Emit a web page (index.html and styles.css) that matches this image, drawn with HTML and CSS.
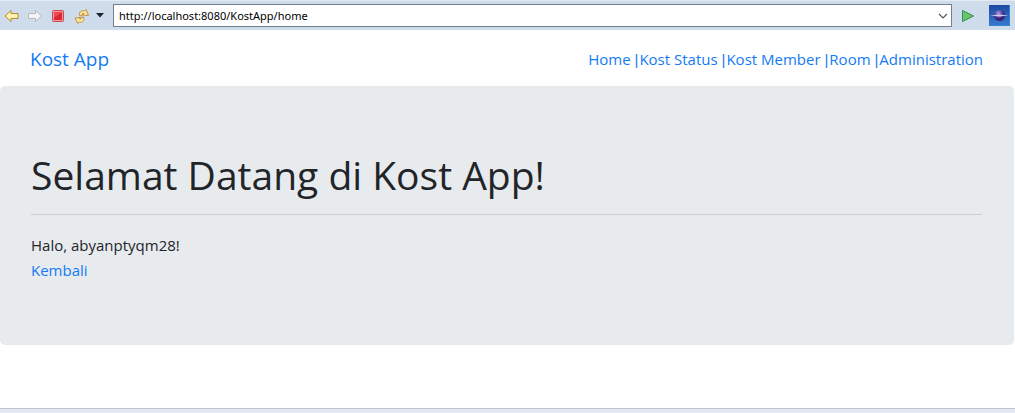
FILE: index.html
```html
<!DOCTYPE html>
<html lang="id">
<head>
<meta charset="utf-8">
<title>Kost App</title>
<link rel="stylesheet" href="styles.css">
</head>
<body>
<div class="browser">
  <form class="toolbar">
    <button type="button" class="tool" aria-label="Back"><svg width="16" height="16" viewBox="0 0 16 16"><path d="M1 8 7 2.500V5.500h7v5H7v3z" fill="#fff3b4" stroke="#b98a20" stroke-linejoin="round"/></svg></button>
    <button type="button" class="tool" aria-label="Forward"><svg width="16" height="16" viewBox="0 0 16 16"><path d="M14.500 8 8.500 2.500V5.500H1.500v5h7v3z" fill="#f1f3f5" stroke="#b5bac1" stroke-linejoin="round"/></svg></button>
    <button type="button" class="tool" aria-label="Stop"><svg width="16" height="16" viewBox="0 0 16 16"><rect x="2.500" y="2.500" width="11" height="11" rx="1" fill="#ee9a9c" stroke="#cf4a50"/><rect x="4" y="4" width="8" height="8" fill="#dd2635"/><path d="M4 4h8L4 10z" fill="#ea4a55"/></svg></button>
    <button type="button" class="tool tool-refresh" aria-label="Refresh"><svg width="18" height="18" viewBox="0 0 18 18" fill="#ffe9a4" stroke="#c28f38" stroke-linejoin="round"><path d="M7 9C5.500 6 7.500 3 11.500 4L13 2.500l2.500 6-6-.500L11 6.500C9.500 6 8.500 7 9 8.500z"/><path d="M10.500 10c1.500 3.500-1 6-4 5l-1.500 1.500-3-5.500 5.500-.500-1 1.500c1.500.500 2.500-.500 2-1.500z"/></svg></button>
    <button type="button" class="tool tool-menu" aria-label="More refresh options"><svg width="8" height="5" viewBox="0 0 8 5"><path d="M0 0h8L4 4.500z" fill="#1c2430"/></svg></button>
    <div class="address">
      <input class="address-input" type="text" aria-label="Address" value="http://localhost:8080/KostApp/home">
      <button type="button" class="address-toggle" aria-label="Show history"><svg width="10" height="6" viewBox="0 0 10 6"><path d="m1 1 4 4 4-4" fill="none" stroke="#555" stroke-width="1.200"/></svg></button>
    </div>
    <button type="button" class="tool tool-go" aria-label="Go"><svg width="16" height="16" viewBox="0 0 16 16"><path d="M2.500 2.500v11l11-5.500z" fill="#6cc56c" stroke="#2c9146" stroke-linejoin="round"/></svg></button>
    <button type="button" class="tool tool-external" aria-label="Open in external browser"><svg width="21" height="21" viewBox="0 0 21 21"><defs><linearGradient id="sky" x2="0" y2="1"><stop stop-color="#1d4aa0"/><stop offset="1" stop-color="#3979d0"/></linearGradient><radialGradient id="planet" cx=".4" cy=".3"><stop stop-color="#a79be0"/><stop offset="1" stop-color="#38217a"/></radialGradient></defs><path d="M0 0h21v21H0z" fill="url(#sky)"/><path d="M0 20.500h20.500V0" fill="none" stroke="#3185d5"/><circle cx="10.500" cy="10.500" r="5.500" fill="url(#planet)"/><path d="M1 10.500 10.500 9.500l9 1-9 1z" fill="#d3c9f3"/></svg></button>
  </form>
  <div class="page">
    <header class="navbar">
      <a class="brand" href="#">Kost App</a>
      <nav class="links"><a href="#">Home <span class="bar">|</span></a><a href="#">Kost Status <span class="bar">|</span></a><a href="#">Kost Member <span class="bar">|</span></a><a href="#">Room <span class="bar">|</span></a><a href="#">Administration</a></nav>
    </header>
    <main class="jumbotron">
      <h1 class="title">Selamat Datang di Kost App!</h1>
      <hr class="rule">
      <p class="greeting">Halo, abyanptyqm28!</p>
      <a class="back" href="#">Kembali</a>
    </main>
  </div>
  <div class="frame-edge"></div>
</div>
</body>
</html>
```
FILE: styles.css
```css
* { box-sizing: border-box; }
body {
  margin: 0;
  background: #fff;
  color: #212529;
  font: 15px/24px "Open Sans", "Noto Sans", sans-serif;
}
a { color: #147af3; text-decoration: none; }
.browser { display: flex; flex-direction: column; min-height: 100vh; }
.toolbar {
  display: flex;
  align-items: center;
  height: 30px;
  padding: 0 5px 0 4px;
  background: #cfdcec;
  border-top: 1px solid #e3eaf4;
}
.tool {
  display: flex;
  flex: none;
  padding: 0;
  margin-right: 7px;
  border: 0;
  background: none;
}
.tool-refresh { margin-right: 5px; }
.tool-menu { margin-right: 9px; }
.tool-go { margin: 0 13px 0 8px; }
.tool-external { margin: 0; }
.address {
  display: flex;
  flex: 1;
  min-width: 0;
  height: 23px;
  background: #fff;
  border: 1px solid #74808f;
}
.address-input {
  flex: 1;
  min-width: 0;
  padding: 0 5px;
  border: 0;
  outline: 0;
  background: none;
  color: #000;
  font: 11px/20px "Noto Sans", sans-serif;
}
.address-toggle {
  display: flex;
  align-items: center;
  justify-content: center;
  width: 17px;
  padding: 0;
  border: 0;
  background: none;
}
.page { flex: 1; }
.navbar {
  display: flex;
  align-items: center;
  justify-content: space-between;
  padding: 14px 32px 12px 30px;
}
.brand { font-size: 19px; line-height: 30px; }
.links { display: flex; gap: 1px; }
.bar { font-family: "Liberation Sans", sans-serif; }
.jumbotron {
  margin-right: 1px;
  padding: 65px 32px 63px 31px;
  background: #e8ebee;
  border-radius: 5px;
}
.title { margin: 0; font-size: 39px; line-height: 48px; font-weight: 400; }
.rule { margin: 15px 0 18px; border: 0; border-top: 1px solid #cbced2; }
.greeting { margin: 0 0 1px; line-height: 24px; }
.back { line-height: 24px; }
.frame-edge { height: 5px; background: #e2e7f2; border-top: 1px solid #bdc4d3; }
```
